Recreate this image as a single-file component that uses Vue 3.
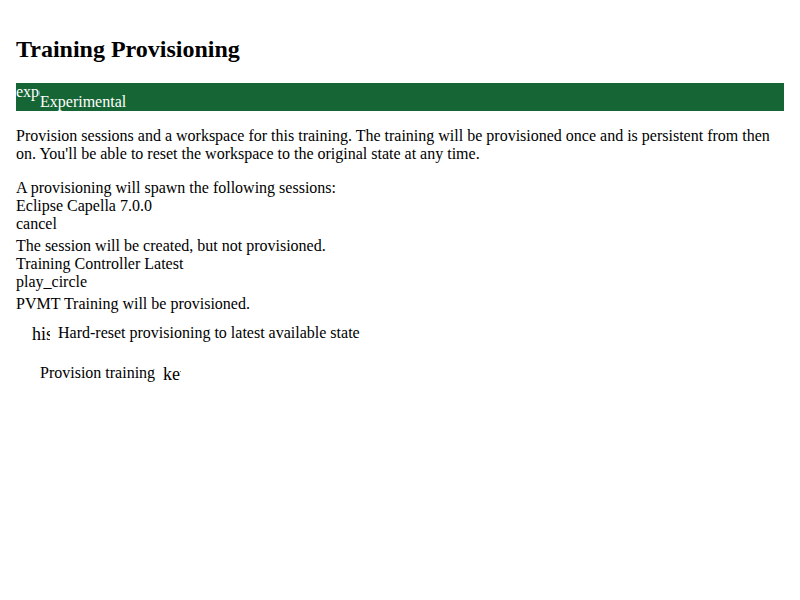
<script setup>
const sessions = [
  {
    name: 'Eclipse Capella 7.0.0',
    icon: 'cancel',
    status: 'The session will be created, but not provisioned.',
  },
  {
    name: 'Training Controller Latest',
    icon: 'play_circle',
    status: 'PVMT Training will be provisioned.',
  },
]
</script>

<template>
  <main class="dialog">
    <h2 class="title">Training Provisioning</h2>
    <div class="banner">
      <span class="banner-icon" aria-hidden="true">experiment</span>
      <span class="banner-text">Experimental</span>
    </div>
    <p class="intro">
      Provision sessions and a workspace for this training. The training will be
      provisioned once and is persistent from then on. You'll be able to reset
      the workspace to the original state at any time.
    </p>
    <div>A provisioning will spawn the following sessions:</div>
    <div v-for="session in sessions" :key="session.name" class="session">
      <div>{{ session.name }}</div>
      <div class="session-icon">{{ session.icon }}</div>
      <div>{{ session.status }}</div>
    </div>
    <div class="actions">
      <button type="button" class="action reset">
        <span class="action-icon" aria-hidden="true">history</span>
        <span>Hard-reset provisioning to latest available state</span>
      </button>
      <button type="button" class="action provision">
        <span>Provision training</span>
        <span class="action-icon" aria-hidden="true">keyboard_arrow_right</span>
      </button>
    </div>
  </main>
</template>

<style>
body {
  margin: 0;
  background: #fff;
}
</style>

<style scoped>
.dialog {
  padding: 16px;
  font-family: "Liberation Serif", "Times New Roman", serif;
  font-size: 16px;
  line-height: 18px;
  color: #000;
}

.title {
  margin: 20px 0;
  font-size: 24px;
  line-height: 27px;
  font-weight: 700;
}

.banner {
  display: flex;
  align-items: flex-end;
  background: #166534;
  color: #fff;
}

.banner-icon {
  width: 24px;
  height: 28px;
  overflow: hidden;
  white-space: nowrap;
}

.intro {
  margin: 16px 0;
}

.session-icon {
  padding-bottom: 4px;
}

.actions {
  display: flex;
  flex-direction: column;
  align-items: flex-start;
}

.action {
  display: flex;
  align-items: center;
  gap: 8px;
  min-height: 40px;
  border: 0;
  background: transparent;
  color: inherit;
  font: inherit;
  cursor: pointer;
}

.reset {
  padding: 0 16px;
}

.provision {
  padding: 0 24px;
}

.action-icon {
  width: 18px;
  height: 18px;
  overflow: hidden;
  font-size: 18px;
  line-height: 20px;
  text-align: left;
  white-space: nowrap;
}
</style>
